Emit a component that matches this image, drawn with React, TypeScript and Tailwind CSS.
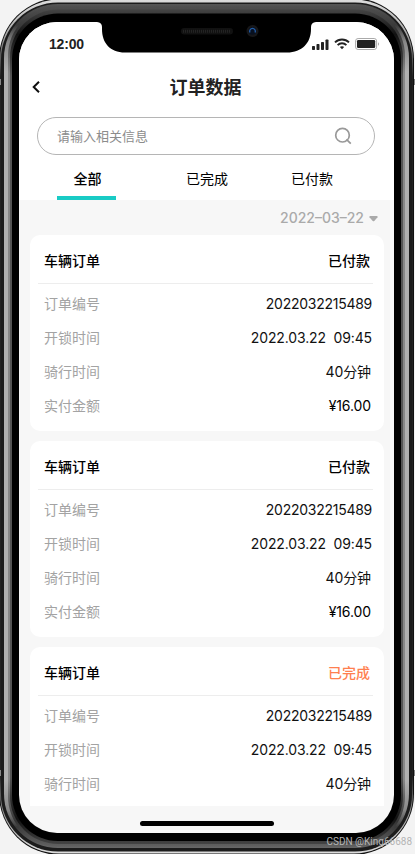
type Order = {
  id: number;
  status: string;
  done?: boolean;
  rows: Row[];
};

type Row = {
  label: string;
  value: string;
  className: string;
};

const ROWS: Row[] = [
  { label: "订单编号", value: "2022032215489", className: "-mr-0.5 tracking-[-0.26px]" },
  { label: "开锁时间", value: "2022.03.22\u00a0 09:45", className: "-mr-0.5 tracking-[-0.13px]" },
  { label: "骑行时间", value: "40分钟", className: "-mr-px tracking-[-0.1px]" },
  { label: "实付金额", value: "¥16.00", className: "-mr-px tracking-[-0.1px] text-black" },
];

const ORDERS: Order[] = [
  { id: 1, status: "已付款", rows: ROWS },
  { id: 2, status: "已付款", rows: ROWS },
  { id: 3, status: "已完成", done: true, rows: ROWS.slice(0, 3) },
];

export default function App() {
  return (
    <div className="relative h-[854px] w-[415px] overflow-hidden bg-[#f3f3f3] pt-[22px] pl-[19px] font-['Inter','Noto_Sans_CJK_SC',sans-serif] text-sm text-[#111]">
      <PhoneFrame />
      <main className="relative flex h-[811px] w-[375px] flex-col overflow-hidden rounded-[38px] bg-[#f7f7f7]">
        <div className="h-[178px] shrink-0 bg-white">
          <StatusBar />
          <Header />
          <SearchBox />
          <Tabs />
        </div>
        <div className="flex h-[35px] shrink-0 items-center justify-end gap-[5px] pr-4 text-[#aaa]">
          <span className="font-medium">2022–03–22</span>
          <svg width="9" height="6" viewBox="0 0 9 6" fill="#aaa" className="mt-0.5">
            <path d="M1 0h7q1 .3.5 1.2L5.3 5q-.8.7-1.6 0L.5 1.2Q0 .3 1 0z" />
          </svg>
        </div>
        <div className="flex h-[571px] shrink-0 flex-col gap-2.5 overflow-hidden pr-2.5 pl-[11px]">
          {ORDERS.map((order) => (
            <OrderCard key={order.id} order={order} />
          ))}
        </div>
        <div className="mx-auto mt-[15px] h-[5px] w-[134px] shrink-0 rounded-full bg-black" />
      </main>
      <Notch />
      <span className="absolute right-[3px] bottom-[5px] font-['Roboto',sans-serif] text-[10px] leading-[14px] text-[#b5b5b5]">
        CSDN @King66688
      </span>
    </div>
  );
}

function StatusBar() {
  return (
    <div className="flex h-11 items-center justify-between pr-[14px] pl-[30px]">
      <span className="font-['Liberation_Sans',sans-serif] text-[14px] font-bold tracking-[-0.2px] text-[#222]">12:00</span>
      <div className="flex items-center gap-[5px]">
        <svg width="18" height="11" viewBox="0 0 18 11" fill="#222" className="ml-px">
          <rect x="1" y="7" width="3" height="4" rx="0.8" />
          <rect x="5.5" y="5" width="3" height="6" rx="0.8" />
          <rect x="10" y="3" width="3" height="8" rx="0.8" />
          <rect x="14.5" y="0.5" width="3" height="10.5" rx="0.8" />
        </svg>
        <svg width="16" height="12" viewBox="0 0 16 12" fill="none" stroke="#222" strokeWidth="1.9">
          <path d="M1 4.4a10 10 0 0 1 14 0M3.6 7.1a6.2 6.2 0 0 1 8.8 0" />
          <path d="M8 8.3q1.5 0 2.1.8L8 11.3 5.9 9.1Q6.5 8.3 8 8.3z" fill="#222" stroke="none" />
        </svg>
        <svg width="25" height="12" viewBox="0 0 25 12">
          <rect x="0.6" y="0.5" width="21" height="11" rx="2.5" fill="none" stroke="#aaa" />
          <rect x="2" y="2" width="18.2" height="8" rx="1.2" fill="#222" />
          <path d="M23 4.2q1 .6 1 1.8t-1 1.8z" fill="#aaa" />
        </svg>
      </div>
    </div>
  );
}

function Header() {
  return (
    <header className="grid h-[42px] grid-cols-[1fr_auto_1fr] items-center">
      <svg width="8" height="12" viewBox="0 0 8 12" fill="none" stroke="#111" strokeWidth="2" className="ml-[13px]">
        <path d="M7 .8 1.7 6 7 11.2" />
      </svg>
      <h1 className="mt-0.5 -ml-0.5 text-[18px] font-bold text-[#222]">订单数据</h1>
    </header>
  );
}

function SearchBox() {
  return (
    <div className="mx-[18px] mt-[9px] flex h-[38px] w-[338px] items-center justify-between rounded-full border border-[#b5b5b5] pr-[22px] pl-[19px]">
      <span className="text-[13px] text-[#8c8c8c]">请输入相关信息</span>
      <svg width="18" height="18" viewBox="0 0 18 18" fill="none" stroke="#999" strokeWidth="1.7">
        <circle cx="8.5" cy="8.2" r="6.8" />
        <path d="m12.4 12.3 4.4 4.4" />
      </svg>
    </div>
  );
}

function Tabs() {
  return (
    <nav className="flex h-[45px] pl-[38px] text-black">
      <div className="flex w-[59px] flex-col items-center justify-between font-medium">
        <span className="mt-[13px] ml-0.5 leading-[22px]">全部</span>
        <span className="h-1 w-full bg-[#19cbc5]" />
      </div>
      <span className="mt-[13px] ml-[70px] leading-[22px]">已完成</span>
      <span className="mt-[13px] ml-[63px] leading-[22px]">已付款</span>
    </nav>
  );
}

function OrderCard({ order }: { order: Order }) {
  return (
    <article className="h-[196px] shrink-0 rounded-[10px] bg-white">
      <div className="mr-[11px] ml-2 flex h-[49px] items-center justify-between border-b border-[#ededed] pt-1 pr-[3px] pl-1.5 font-medium text-black">
        <h2>车辆订单</h2>
        <span className={order.done ? "text-[#ff7f50]" : "text-black"}>{order.status}</span>
      </div>
      <dl className="pt-[3px] pr-3.5 pl-3.5">
        {order.rows.map((row) => (
          <div key={row.label} className="flex h-[34px] items-center justify-between">
            <dt className="text-[#a3a3a3]">{row.label}</dt>
            <dd className={row.className}>{row.value}</dd>
          </div>
        ))}
      </dl>
    </article>
  );
}

function Notch() {
  return (
    <svg width="221" height="38" viewBox="0 0 221 38" className="absolute top-[15px] left-[97px]">
      <path d="M0 7q5 .5 5 5v2c0 14 8 23.5 23 23.5h162c15 0 24-9.5 24-23.5v-2q0-4.5 5-5V0H0z" fill="#000" />
      <rect x="84" y="13" width="52" height="6.5" rx="3.2" fill="#111" />
      <path d="M86 16.2h48" stroke="#232323" strokeWidth="3" strokeDasharray="1 1" />
      <circle cx="155.500" cy="16" r="6" fill="#171719" />
      <circle cx="155.500" cy="16" r="3.8" fill="#08101f" />
      <path d="M153 17.5a2.8 2.8 0 1 1 5 0" fill="none" stroke="#255fa8" strokeWidth="1.3" />
    </svg>
  );
}

// Concentric bezel rings from the outer metal edge to the black glass border
function PhoneFrame() {
  return (
    <svg width="415" height="854" viewBox="0 0 415 854" className="absolute inset-0">
      <defs>
        <linearGradient id="edge" x1="0" y1="0" x2="0" y2="1">
          <stop offset="0" stopColor="#ddd" />
          <stop offset="0.04" stopColor="#aaa" />
          <stop offset="0.09" stopColor="#222" />
          <stop offset="0.91" stopColor="#222" />
          <stop offset="0.96" stopColor="#aaa" />
          <stop offset="1" stopColor="#ddd" />
        </linearGradient>
        <linearGradient id="band" x1="0" y1="0" x2="0" y2="1">
          <stop offset="0" stopColor="#555" />
          <stop offset="0.025" stopColor="#3a3a3a" />
          <stop offset="0.045" stopColor="#888" />
          <stop offset="0.08" stopColor="#b0b0b0" />
          <stop offset="0.92" stopColor="#b0b0b0" />
          <stop offset="0.955" stopColor="#888" />
          <stop offset="0.975" stopColor="#3a3a3a" />
          <stop offset="1" stopColor="#666" />
        </linearGradient>
        <linearGradient id="middle" x1="0" y1="0" x2="0" y2="1">
          <stop offset="0" stopColor="#505050" />
          <stop offset="0.03" stopColor="#333" />
          <stop offset="0.08" stopColor="#888" />
          <stop offset="0.92" stopColor="#888" />
          <stop offset="0.97" stopColor="#333" />
          <stop offset="1" stopColor="#606060" />
        </linearGradient>
        <linearGradient id="inner" x1="0" y1="0" x2="0" y2="1">
          <stop offset="0" stopColor="#444" />
          <stop offset="0.03" stopColor="#111" />
          <stop offset="0.08" stopColor="#555" />
          <stop offset="0.92" stopColor="#555" />
          <stop offset="0.97" stopColor="#111" />
          <stop offset="1" stopColor="#444" />
        </linearGradient>
      </defs>
      <rect x="-1" y="-2" width="415" height="857" rx="61" fill="#111" />
      <rect x="0" y="-0.5" width="413" height="854" rx="59" fill="url(#edge)" />
      <rect x="1" y="2.5" width="411" height="849" rx="57" fill="#1c1c1c" />
      <rect x="4" y="4" width="405" height="844" rx="54" fill="url(#band)" />
      <rect x="8" y="6" width="397" height="840.5" rx="50" fill="url(#middle)" />
      <rect x="10" y="9.5" width="393" height="834.5" rx="48" fill="url(#inner)" />
      <rect x="12" y="13.5" width="389" height="827.5" rx="46" fill="#000" />
      <path d="M414 79h1v6h-1zM414 770h1v6h-1zM0 79h1v6H0zM0 770h1v6H0z" fill="#888" />
    </svg>
  );
}
